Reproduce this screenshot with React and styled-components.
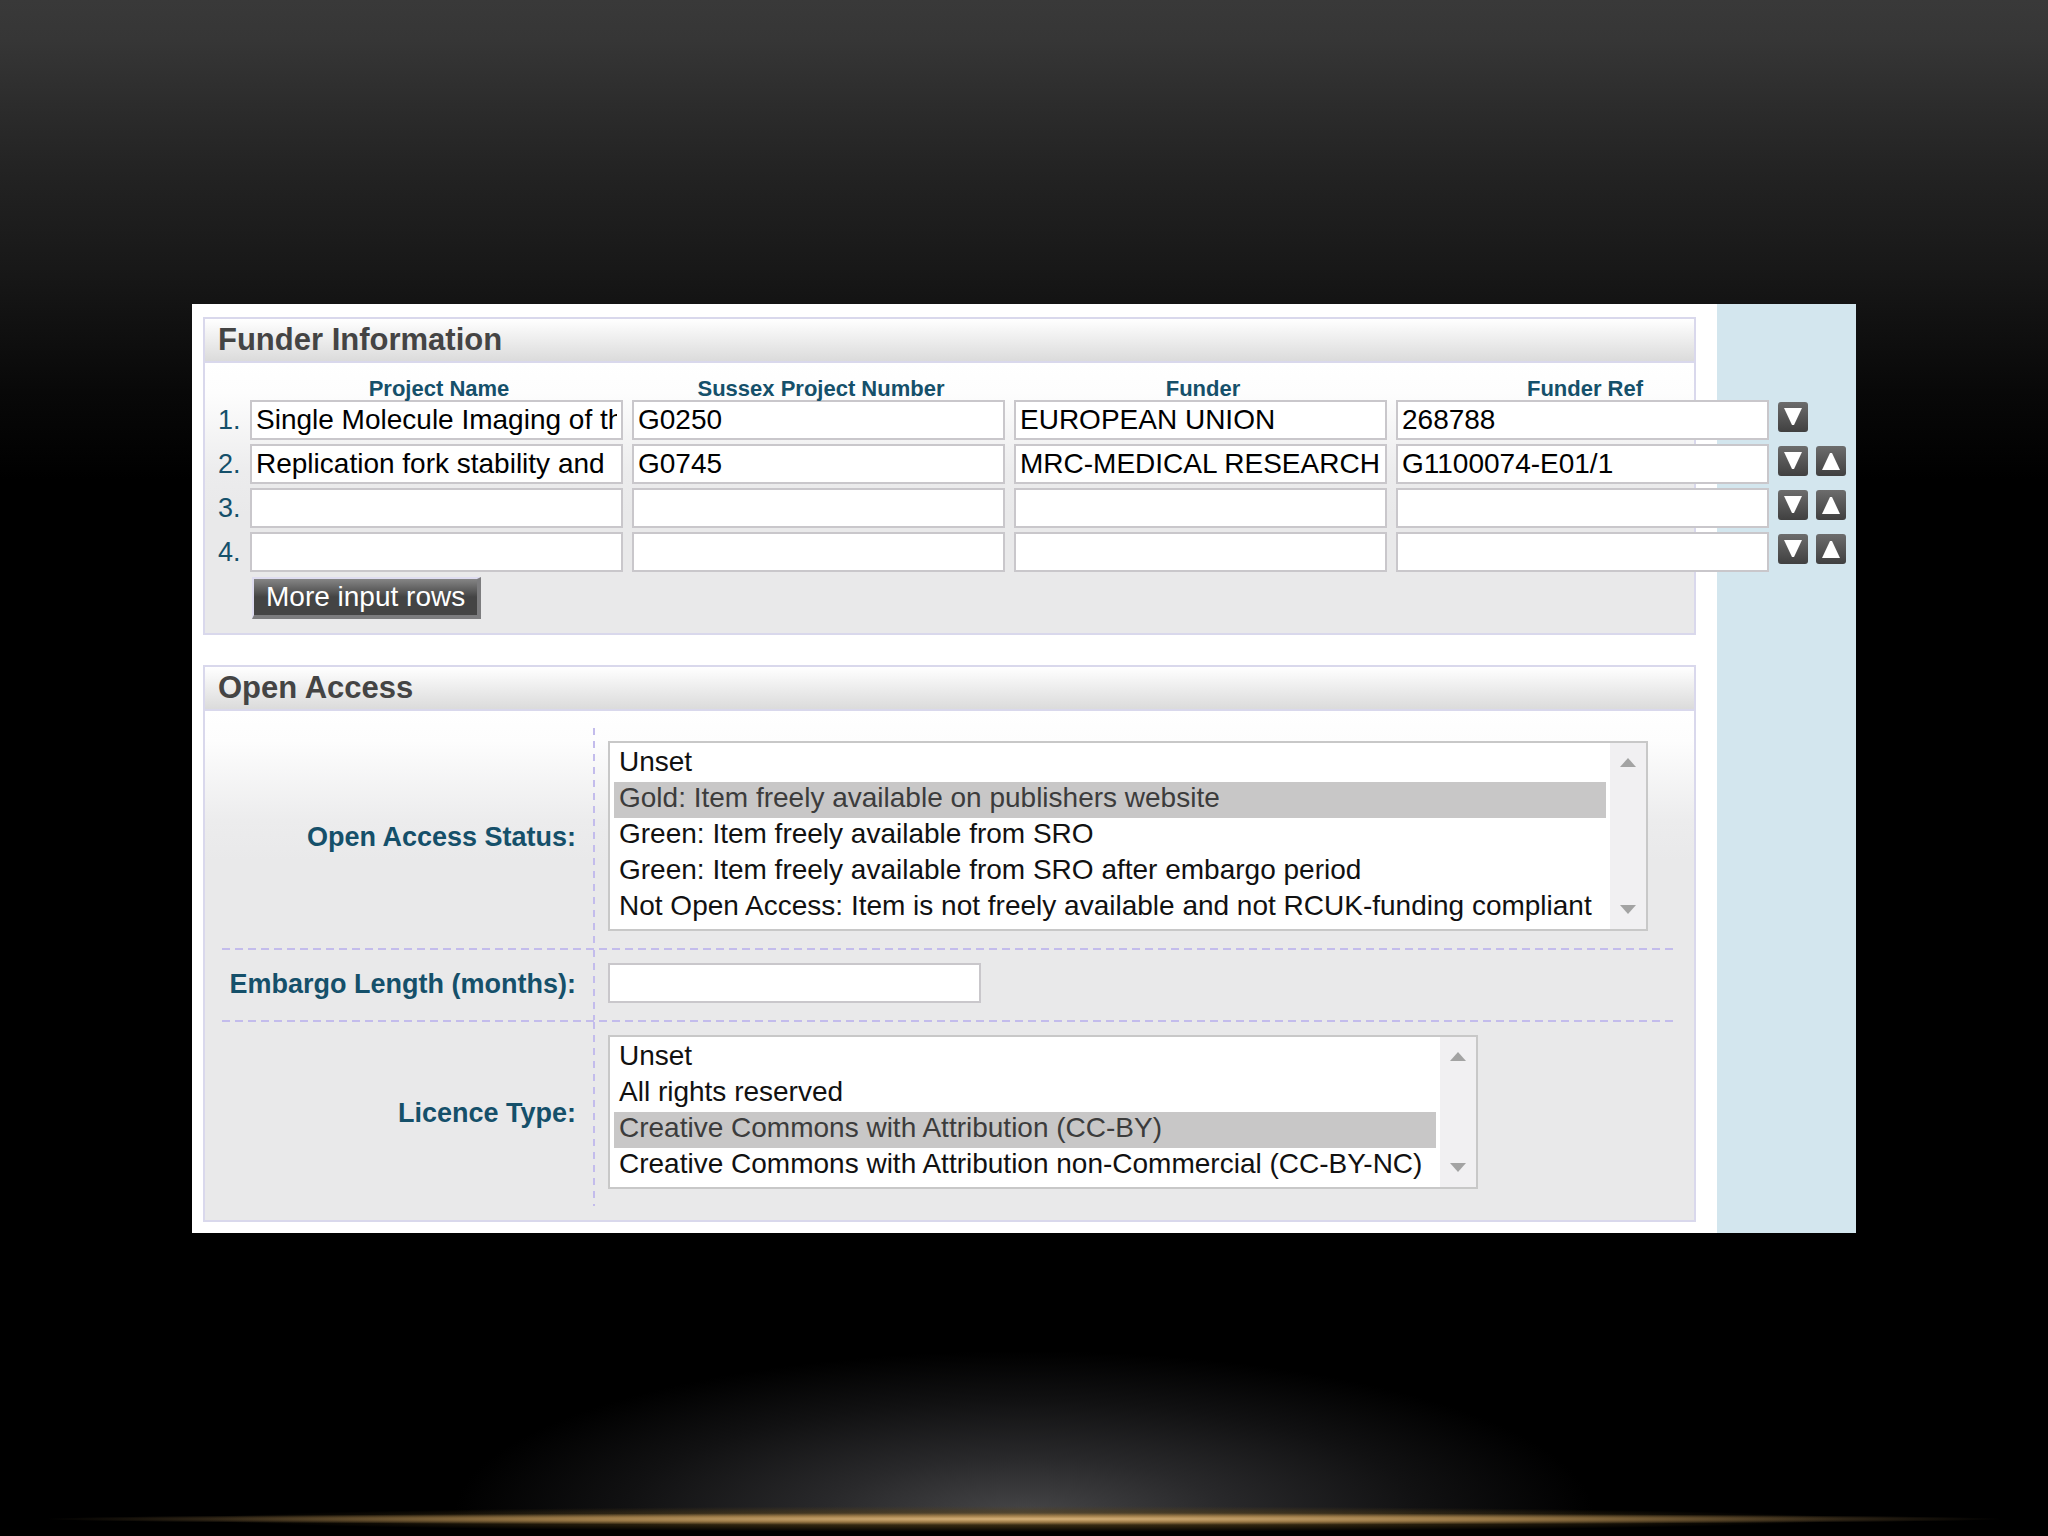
import React from "react";
import styled, { createGlobalStyle } from "styled-components";

const columns = ["Project Name", "Sussex Project Number", "Funder", "Funder Ref"];

const funders = [
  ["Single Molecule Imaging of the", "G0250", "EUROPEAN UNION", "268788"],
  ["Replication fork stability and ", "G0745", "MRC-MEDICAL RESEARCH COUNCIL", "G1100074-E01/1"],
  ["", "", "", ""],
  ["", "", "", ""],
];

const statuses = [
  "Unset",
  "Gold: Item freely available on publishers website",
  "Green: Item freely available from SRO",
  "Green: Item freely available from SRO after embargo period",
  "Not Open Access: Item is not freely available and not RCUK-funding compliant",
];

const licences = [
  "Unset",
  "All rights reserved",
  "Creative Commons with Attribution (CC-BY)",
  "Creative Commons with Attribution non-Commercial (CC-BY-NC)",
];

function Move({ up, row }) {
  return (
    <MoveButton type="button" aria-label={(up ? "Move up row " : "Move down row ") + row}>
      <svg width="18" height="18" viewBox="0 0 18 18" fill="#fff" aria-hidden="true">
        <path d={up ? "M8 1 H10 L18 18 H0 Z" : "M0 0 H18 L10 17 H8 Z"} />
      </svg>
    </MoveButton>
  );
}

function List({ id, options, value }) {
  return (
    <ListBox>
      <ListSelect id={id} size={options.length} defaultValue={value}>
        {options.map((option) => (
          <option key={option} value={option}>{option}</option>
        ))}
      </ListSelect>
      <Track>
        <svg width="16" height="9" viewBox="0 0 16 9" fill="#a3a3a3" aria-hidden="true">
          <path d="M8 0 L16 9 H0 Z" />
        </svg>
        <svg width="16" height="9" viewBox="0 0 16 9" fill="#a3a3a3" aria-hidden="true">
          <path d="M0 0 H16 L8 9 Z" />
        </svg>
      </Track>
    </ListBox>
  );
}

export default function App() {
  return (
    <Page>
      <GlobalStyle />
      <Sheet>
        <Main>
          <Panel>
            <PanelTitle>Funder Information</PanelTitle>
            <FunderBody>
              <FunderTable>
                <thead>
                  <tr>
                    <td></td>
                    {columns.map((name) => (
                      <th key={name} scope="col">{name}</th>
                    ))}
                  </tr>
                </thead>
                <tbody>
                  {funders.map((funder, i) => (
                    <tr key={i}>
                      <RowNumber>{i + 1}.</RowNumber>
                      {funder.map((value, j) => (
                        <td key={j}>
                          <TextInput
                            type="text"
                            aria-label={columns[j] + " " + (i + 1)}
                            defaultValue={value}
                          />
                        </td>
                      ))}
                      <td>
                        <Moves>
                          <Move row={i + 1} />
                          {i > 0 && <Move up row={i + 1} />}
                        </Moves>
                      </td>
                    </tr>
                  ))}
                </tbody>
              </FunderTable>
              <MoreButton type="button">More input rows</MoreButton>
            </FunderBody>
          </Panel>

          <Panel>
            <PanelTitle>Open Access</PanelTitle>
            <Fields>
              <Field>
                <label htmlFor="status">Open Access Status:</label>
                <Value>
                  <List id="status" options={statuses} value={statuses[1]} />
                </Value>
              </Field>
              <Field>
                <label htmlFor="embargo">Embargo Length (months):</label>
                <Value>
                  <TextInput id="embargo" type="text" />
                </Value>
              </Field>
              <Field>
                <label htmlFor="licence">Licence Type:</label>
                <Value>
                  <List id="licence" options={licences} value={licences[2]} />
                </Value>
              </Field>
            </Fields>
          </Panel>
        </Main>
        <Side />
      </Sheet>
    </Page>
  );
}

const GlobalStyle = createGlobalStyle`
  * {
    box-sizing: border-box;
  }
  body {
    margin: 0;
    background: #000;
    font-family: "Liberation Sans", Arial, sans-serif;
  }
  input, select, button {
    font-family: inherit;
    font-size: 28px;
    margin: 0;
  }
`;

/* gold line of light on the floor, grey glow over it, soft light from the top */
const Page = styled.div`
  min-height: 100vh;
  padding: 0 192px;
  display: flex;
  align-items: center;
  background:
    radial-gradient(ellipse 980px 6px at 50% calc(100% - 17px), #d6b179 0, rgba(176, 138, 82, 0.8) 50%, transparent 100%),
    radial-gradient(ellipse 820px 13px at 50% calc(100% - 17px), rgba(120, 92, 44, 0.8) 0, rgba(84, 64, 26, 0.5) 60%, transparent 100%),
    linear-gradient(transparent calc(100% - 20px), #000 calc(100% - 15px)),
    radial-gradient(ellipse 570px 165px at 50% calc(100% - 20px), #474749 0, #29292b 35%, #111112 70%, transparent 100%),
    linear-gradient(#393939 0, #363636 40px, #2b2b2b 112px, #222 178px, #181818 268px, #080808 392px, #000 480px);
`;

const Sheet = styled.div`
  flex: 1;
  min-width: 0;
  display: flex;
  background: #fff;
`;

/* the funder table is wider than its panel and runs over the side column */
const Main = styled.main`
  flex: 1;
  min-width: 0;
  position: relative;
  z-index: 1;
  display: flex;
  flex-direction: column;
  gap: 30px;
  padding: 13px 21px 11px 11px;
`;

const Side = styled.aside`
  flex: none;
  width: 139px;
  background: #d3e6ee;
`;

const Panel = styled.section`
  min-width: 0;
  border: 2px solid #d9d8ec;
`;

const PanelTitle = styled.h2`
  margin: 0;
  padding: 0 13px;
  height: 44px;
  line-height: 42px;
  font-size: 31px;
  color: #444;
  background: linear-gradient(#fff, #dbdbdb);
  border-bottom: 2px solid #d9d8ec;
`;

const PanelBody = styled.div`
  background: linear-gradient(#fff 0, #fdfdfd 30px, #ececed 110px, #e9e9ea 150px);
`;

const FunderBody = styled(PanelBody)`
  padding: 15px 13px 14px;
`;

const FunderTable = styled.table`
  border-collapse: collapse;
  color: #15506a;

  th, td {
    padding: 0 9px 4px 0;
    vertical-align: top;
  }
  thead th {
    padding: 0 4px 0 0;
    font-size: 22px;
    line-height: 22px;
  }
  tbody tr:last-child td {
    padding-bottom: 0;
  }
`;

const RowNumber = styled.td`
  min-width: 32px;
  font-size: 27px;
  line-height: 40px;
`;

const TextInput = styled.input`
  display: block;
  width: 373px;
  height: 40px;
  padding: 0 4px;
  border: 2px solid #c9c7cb;
  background: #fff;
  color: #000;
  outline: none;
`;

const Moves = styled.div`
  display: flex;
  gap: 8px;
  padding-top: 2px;
`;

const MoveButton = styled.button`
  width: 30px;
  height: 30px;
  padding: 0;
  display: flex;
  align-items: center;
  justify-content: center;
  border: 0;
  border-radius: 3px;
  background: linear-gradient(#6c6c6c, #404040);
`;

const MoreButton = styled.button`
  display: block;
  height: 42px;
  margin: 5px 0 0 34px;
  padding: 0 12px;
  border: 2px solid;
  border-width: 2px 4px 4px 2px;
  border-color: #dedcf0 #7c7c7e #7c7c7e #dedcf0;
  background: linear-gradient(#858585 0, #444 50%);
  color: #fff;
  line-height: 34px;
`;

const Fields = styled(PanelBody)`
  padding: 17px 16px 14px 17px;
`;

const Field = styled.div`
  display: grid;
  grid-template-columns: 371px 1fr;
  align-items: center;

  & + & {
    padding-top: 2px;
    background: repeating-linear-gradient(90deg, #c3bcec 0 8px, transparent 8px 13px) top / 100% 2px no-repeat;
  }
  label {
    padding-right: 17px;
    text-align: right;
    font-size: 27px;
    font-weight: bold;
    color: #15506a;
  }
`;

const Value = styled.div`
  padding: 13px 0 17px 15px;
  background: repeating-linear-gradient(#c3bcec 0 7px, transparent 7px 13px) left / 2px 100% no-repeat;
`;

const ListBox = styled.div`
  display: inline-flex;
  vertical-align: top;
  border: 2px solid #c8c8c8;
  background: #fff;
`;

const ListSelect = styled.select`
  padding: 3px 4px;
  border: 0;
  border-radius: 0;
  outline: none;
  overflow: hidden;
  background: #fff;
  color: #111;

  option {
    height: 36px;
    min-height: 36px;
    padding: 0 14px 0 5px;
    line-height: 34px;
  }
  option:checked {
    background: #c8c7c7 linear-gradient(#c8c7c7, #c8c7c7);
    color: #3c3c3c;
  }
`;

const Track = styled.div`
  width: 36px;
  padding: 15px 0;
  display: flex;
  flex-direction: column;
  align-items: center;
  justify-content: space-between;
  background: #f1f0f2;
`;
